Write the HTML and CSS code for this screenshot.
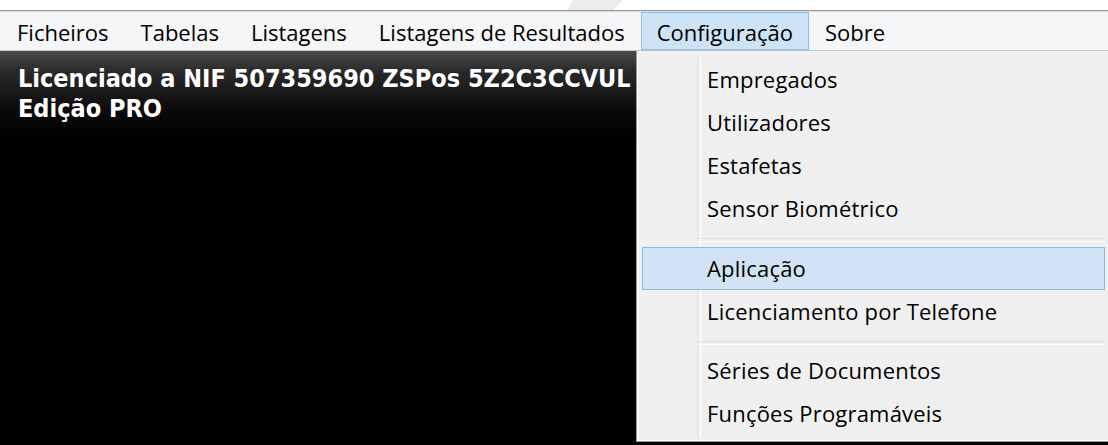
FILE: index.html
```html
<!DOCTYPE html>
<html lang="pt">
<head>
<meta charset="utf-8">
<title>ZSPos</title>
<link rel="stylesheet" href="styles.css">
</head>
<body>
<div class="window">
  <div class="titlestrip">
    <svg class="mark" width="1108" height="10" viewBox="0 0 1108 10" aria-hidden="true">
      <polygon points="573,0 623,0 613,10 567,10" fill="#ececec"/>
    </svg>
  </div>
  <nav class="menubar">
    <span class="menu-item">Ficheiros</span>
    <span class="menu-item">Tabelas</span>
    <span class="menu-item">Listagens</span>
    <span class="menu-item">Listagens de Resultados</span>
    <span class="menu-item is-open">Configuração</span>
    <span class="menu-item">Sobre</span>
  </nav>
  <main class="workspace">
    <p class="licence">Licenciado a NIF 507359690 ZSPos 5Z2C3CCVUL<br>Edição PRO</p>
  </main>
  <ul class="dropdown">
    <li class="drop-item">Empregados</li>
    <li class="drop-item">Utilizadores</li>
    <li class="drop-item">Estafetas</li>
    <li class="drop-item">Sensor Biométrico</li>
    <li class="drop-sep"></li>
    <li class="drop-item is-hover">Aplicação</li>
    <li class="drop-item">Licenciamento por Telefone</li>
    <li class="drop-sep"></li>
    <li class="drop-item">Séries de Documentos</li>
    <li class="drop-item">Funções Programáveis</li>
  </ul>
</div>
</body>
</html>
```
FILE: styles.css
```css
* { box-sizing: border-box; }

html, body {
  margin: 0;
  padding: 0;
  width: 1108px;
  height: 445px;
  overflow: hidden;
  background: #000;
}

.window {
  position: relative;
  width: 1108px;
  height: 445px;
  display: flex;
  flex-direction: column;
  font-family: "Open Sans", "Noto Sans", sans-serif;
}

.titlestrip {
  height: 10px;
  background: #fff;
  line-height: 0;
}

.mark { display: block; }

.menubar {
  display: flex;
  height: 41px;
  padding: 1px 0 0 1px;
  background: #f5f6f7;
  border-top: 1px solid #9c9c9c;
  box-shadow: inset 0 1px 0 #d9d9d9;
  border-bottom: 1px solid #c4c4c4;
}

.menu-item {
  display: block;
  height: 38px;
  padding: 2px 15px 0;
  border: 1px solid transparent;
  font-size: 22px;
  line-height: 34px;
  color: #000;
  white-space: nowrap;
}

.menu-item.is-open {
  background: #cde4f7;
  border-color: #92c0ea;
}

.workspace {
  flex: 1;
  background: linear-gradient(#4a4a4a 0, #2a2a2a 20px, #0a0a0a 60px, #000 90px);
  padding: 13px 0 0 18px;
}

.licence {
  margin: 0;
  color: #fff;
  font-family: "DejaVu Sans Condensed", "DejaVu Sans", sans-serif;
  font-weight: bold;
  font-size: 25px;
  line-height: 30px;
}

/* open drop-down of the Configuração menu */
.dropdown {
  position: absolute;
  left: 636px;
  top: 51px;
  width: 473px;
  margin: 0;
  padding: 7px 3px 6px 5px;
  list-style: none;
  background: #f0f0f0;
  border: 1px solid #979797;
  border-top: 0;
  box-shadow: inset 1px 0 0 #fcfcfc, inset 0 -1px 0 #fcfcfc;
}

.dropdown::before {
  content: "";
  position: absolute;
  left: 60px;
  top: 6px;
  bottom: 3px;
  width: 2px;
  border-left: 1px solid #e2e3e3;
  border-right: 1px solid #ffffff;
}

.drop-item {
  position: relative;
  height: 43px;
  padding: 0 0 2px 64px;
  border: 1px solid transparent;
  font-size: 22px;
  letter-spacing: 0.2px;
  line-height: 41px;
  color: #000;
  white-space: nowrap;
}

.drop-item.is-hover {
  background: #d1e3f5;
  border-color: #8dbcea;
}

.drop-sep {
  position: relative;
  height: 17px;
  padding-top: 8px;
  margin-left: 55px;
}

.drop-sep::after {
  content: "";
  display: block;
  height: 2px;
  border-top: 1px solid #e0e0e0;
  border-bottom: 1px solid #ffffff;
}

.drop-sep + .drop-item + .drop-item + .drop-sep {
  height: 16px;
}
```
